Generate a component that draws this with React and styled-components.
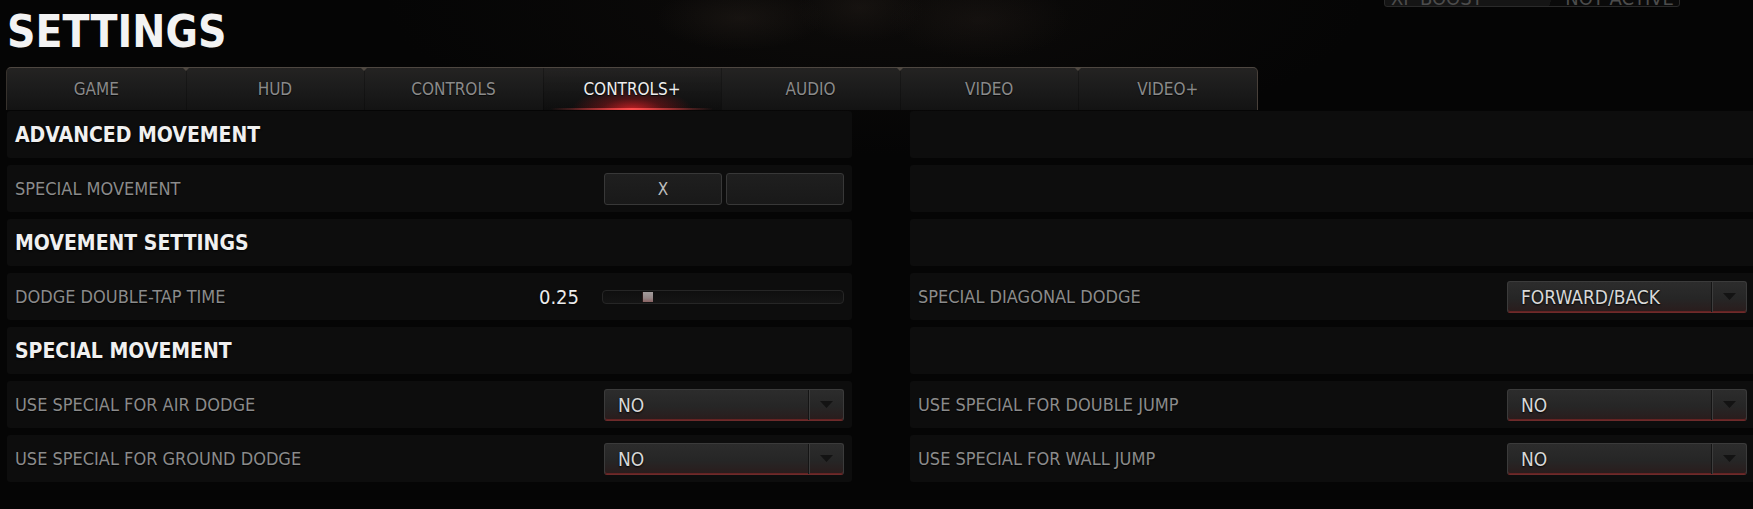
import React from 'react';
import styled, { createGlobalStyle, css } from 'styled-components';

const FONT = `"DejaVu Sans Condensed", "DejaVu Sans", "Liberation Sans", sans-serif`;

const GlobalStyle = createGlobalStyle`
  html, body { margin: 0; padding: 0; background: #050505; }
  body { overflow: hidden; font-family: ${FONT}; font-stretch: condensed; }
  * { box-sizing: border-box; }
`;

const Page = styled.div`
  position: relative;
  width: 1753px;
  height: 509px;
  overflow: hidden;
  padding: 10px 0 0 7px;
  background:
    radial-gradient(ellipse 120px 46px at 740px 18px, rgba(46, 38, 32, 0.35), transparent 70%),
    radial-gradient(ellipse 90px 50px at 860px 8px, rgba(40, 33, 28, 0.35), transparent 70%),
    radial-gradient(ellipse 130px 55px at 980px 20px, rgba(42, 34, 29, 0.3), transparent 70%),
    radial-gradient(ellipse 700px 220px at 50% 0%, rgba(18, 15, 13, 0.6), transparent 70%),
    #050505;
`;

const Title = styled.h1`
  margin: 0 0 13px 0;
  font-size: 44px;
  line-height: 44px;
  font-weight: 700;
  color: #f3f3f3;
`;

const XpBadge = styled.div`
  position: absolute;
  top: -23px;
  left: 1384px;
  width: 296px;
  height: 30px;
  display: flex;
  justify-content: space-between;
  align-items: flex-end;
  padding: 0 5px 0 6px;
  border: 1px solid #2a2a2a;
  border-radius: 3px;
  background: linear-gradient(105deg, #151515 0 57%, #0a0a0a 57%);
  font-size: 20px;
  line-height: 16px;
  color: #4c4c4c;
`;

const TabBar = styled.nav`
  display: flex;
  width: 1252px;
  height: 43px;
  margin-left: -1px;
  border-top: 1px solid #4e4741;
  border-left: 1px solid #37322d;
  border-right: 1px solid #48403a;
  border-radius: 5px 5px 0 0;
  background: linear-gradient(180deg, #242322 0%, #1c1c1c 45%, #131313 100%);
`;

const Tab = styled.div`
  position: relative;
  flex: 1;
  display: flex;
  align-items: center;
  justify-content: center;
  font-size: 17px;
  color: ${(p) => (p.$active ? '#ededed' : '#8a8a8a')};
  text-shadow: 0 1px 1px rgba(0, 0, 0, 0.8);

  & + & {
    box-shadow: inset 1px 0 0 rgba(0, 0, 0, 0.25);
  }

  & + &::before {
    content: '';
    position: absolute;
    top: -1px;
    left: -4px;
    border-left: 4px solid transparent;
    border-right: 4px solid transparent;
    border-top: 4px solid #4f4841;
  }

  ${(p) =>
    p.$active &&
    css`
      background: linear-gradient(180deg, rgba(0, 0, 0, 0) 0%, rgba(0, 0, 0, 0.25) 100%);
      &::after {
        content: '';
        position: absolute;
        left: 8px;
        right: 8px;
        bottom: 0;
        height: 28px;
        background:
          linear-gradient(90deg, transparent 0%, rgba(255, 80, 80, 0.95) 50%, transparent 100%) bottom / 100% 2px no-repeat,
          radial-gradient(ellipse 48% 100% at 50% 100%, rgba(225, 35, 40, 0.85) 0%, rgba(170, 22, 28, 0.4) 40%, transparent 78%);
      }
    `}
`;

const TabLabel = styled.span`
  position: relative;
  z-index: 1;
`;

const Columns = styled.div`
  display: grid;
  grid-template-columns: 845px 845px;
  column-gap: 58px;
  margin-top: 1px;
`;

const Column = styled.div`
  display: flex;
  flex-direction: column;
  gap: 7px;
`;

const Row = styled.div`
  height: 47px;
  padding: 0 8px;
  display: flex;
  align-items: center;
  justify-content: space-between;
  border-radius: 3px;
  background: #0d0d0d;
`;

const Heading = styled.h2`
  margin: 0;
  font-size: 21px;
  font-weight: 700;
  color: #f0f0f0;
  text-shadow: 0 1px 2px rgba(0, 0, 0, 0.9);
`;

const Label = styled.span`
  font-size: 18px;
  color: #8b8b8b;
  text-shadow: 0 1px 1px rgba(0, 0, 0, 0.9);
`;

const KeyGroup = styled.div`
  display: flex;
  gap: 4px;
`;

const KeyButton = styled.div`
  width: 118px;
  height: 32px;
  display: flex;
  align-items: center;
  justify-content: center;
  border: 1px solid #383838;
  border-radius: 3px;
  background: linear-gradient(180deg, #1f1f1f, #191919);
  font-size: 17px;
  color: #bdbdbd;
`;

const SliderGroup = styled.div`
  display: flex;
  align-items: center;
  gap: 23px;
`;

const SliderValue = styled.span`
  font-size: 20px;
  color: #ececec;
  text-shadow: 0 1px 2px #000;
`;

const Track = styled.div`
  position: relative;
  width: 242px;
  height: 14px;
  border: 1px solid #262626;
  border-radius: 4px;
  background: linear-gradient(180deg, #0f0f0f, #151515);
`;

const Thumb = styled.div`
  position: absolute;
  top: 1px;
  width: 10px;
  height: 10px;
  background: linear-gradient(180deg, #a39d9d 0%, #948686 60%, #8a6262 100%);
  box-shadow: -1px 0 0 #2a1a1a;
`;

const Select = styled.div`
  display: flex;
  width: 240px;
  height: 32px;
  border: 1px solid #3b3b3b;
  border-bottom-color: #6e2b2b;
  border-radius: 3px;
  overflow: hidden;
  background: linear-gradient(180deg, #2c2c2c 0%, #262626 55%, #2a1c1c 100%);
  box-shadow: inset 0 -1px 0 rgba(170, 45, 45, 0.45);
`;

const SelectValue = styled.div`
  flex: 1;
  display: flex;
  align-items: center;
  padding-left: 13px;
  font-size: 19px;
  color: #d8d8d8;
  text-shadow: 0 1px 2px #000;
`;

const SelectArrow = styled.div`
  width: 35px;
  display: flex;
  align-items: center;
  justify-content: center;
  border-left: 1px solid #141414;
  box-shadow: inset 1px 0 0 #3c3c3c;
`;

const Arrow = () => (
  <svg width="13" height="7" viewBox="0 0 13 7">
    <polygon points="0,0 13,0 6.5,7" fill="#131313" />
  </svg>
);

const Dropdown = ({ value }) => (
  <Select>
    <SelectValue>{value}</SelectValue>
    <SelectArrow>
      <Arrow />
    </SelectArrow>
  </Select>
);

const Slider = ({ value, min, max }) => {
  const pct = ((value - min) / (max - min)) * 100;
  return (
    <SliderGroup>
      <SliderValue>{value.toFixed(2)}</SliderValue>
      <Track>
        <Thumb style={{ left: `${pct}%` }} />
      </Track>
    </SliderGroup>
  );
};

const tabs = ['GAME', 'HUD', 'CONTROLS', 'CONTROLS+', 'AUDIO', 'VIDEO', 'VIDEO+'];

export default function App() {
  return (
    <>
      <GlobalStyle />
      <Page>
        <XpBadge>
          <span>XP BOOST</span>
          <span>NOT ACTIVE</span>
        </XpBadge>
        <Title>SETTINGS</Title>
        <TabBar>
          {tabs.map((t) => (
            <Tab key={t} $active={t === 'CONTROLS+'}>
              <TabLabel>{t}</TabLabel>
            </Tab>
          ))}
        </TabBar>
        <Columns>
          <Column>
            <Row>
              <Heading>ADVANCED MOVEMENT</Heading>
            </Row>
            <Row>
              <Label>SPECIAL MOVEMENT</Label>
              <KeyGroup>
                <KeyButton>X</KeyButton>
                <KeyButton />
              </KeyGroup>
            </Row>
            <Row>
              <Heading>MOVEMENT SETTINGS</Heading>
            </Row>
            <Row>
              <Label>DODGE DOUBLE-TAP TIME</Label>
              <Slider value={0.25} min={0.1} max={1.0} />
            </Row>
            <Row>
              <Heading>SPECIAL MOVEMENT</Heading>
            </Row>
            <Row>
              <Label>USE SPECIAL FOR AIR DODGE</Label>
              <Dropdown value="NO" />
            </Row>
            <Row>
              <Label>USE SPECIAL FOR GROUND DODGE</Label>
              <Dropdown value="NO" />
            </Row>
          </Column>
          <Column>
            <Row />
            <Row />
            <Row />
            <Row>
              <Label>SPECIAL DIAGONAL DODGE</Label>
              <Dropdown value="FORWARD/BACK" />
            </Row>
            <Row />
            <Row>
              <Label>USE SPECIAL FOR DOUBLE JUMP</Label>
              <Dropdown value="NO" />
            </Row>
            <Row>
              <Label>USE SPECIAL FOR WALL JUMP</Label>
              <Dropdown value="NO" />
            </Row>
          </Column>
        </Columns>
      </Page>
    </>
  );
}
